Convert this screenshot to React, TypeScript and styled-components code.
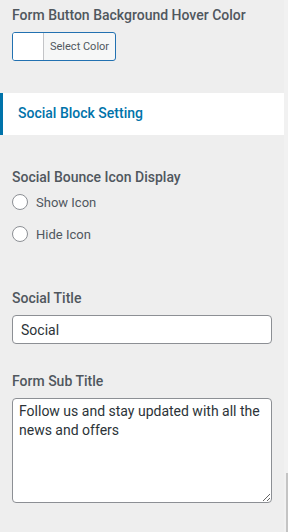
import React from "react";
import styled, { createGlobalStyle } from "styled-components";

const GlobalStyle = createGlobalStyle`
	html, body {
		margin: 0;
		padding: 0;
		background: #eeeeee;
	}
	body {
		font-family: Roboto, "Liberation Sans", sans-serif;
		color: #50575e;
	}
`;

const Page = styled.div`
	display: flex;
	width: 288px;
	height: 532px;
	overflow: hidden;
`;

const Main = styled.div`
	flex: 1;
	display: flex;
	flex-direction: column;
	padding-top: 6px;
`;

const ScrollTrack = styled.div`
	width: 4px;
	background: #f1f1f1;
	display: flex;
	flex-direction: column;
	justify-content: flex-end;
	align-items: flex-end;
`;

const Thumb = styled.div`
	width: 2px;
	height: 59px;
	background: #c4c4c4;
`;

const Field = styled.div<{ mt?: number }>`
	padding: 0 12px;
	margin-top: ${(p) => p.mt || 0}px;
`;

const Label = styled.div`
	font-size: 14px;
	font-weight: 500;
	line-height: 18px;
	color: #50575e;
	margin-bottom: 8px;
`;

const ColorButton = styled.div`
	display: flex;
	width: 104px;
	height: 29px;
	box-sizing: border-box;
	border: 1px solid #2271b1;
	border-radius: 3px;
	overflow: hidden;
	background: #f6f7f7;
`;

const Swatch = styled.div`
	width: 30px;
	background: #ffffff;
	border-right: 1px solid #c3c4c7;
`;

const ColorText = styled.span`
	font-size: 11px;
	line-height: 27px;
	padding-left: 6px;
	color: #50575e;
`;

const SectionHeader = styled.div`
	margin-top: 32px;
	height: 42px;
	box-sizing: border-box;
	padding-bottom: 2px;
	background: #ffffff;
	border-left: 3px solid #0073aa;
	display: flex;
	align-items: center;
	padding-left: 15px;
	font-size: 14px;
	font-weight: 500;
	color: #0073aa;
`;

const RadioRow = styled.label`
	display: flex;
	align-items: center;
	gap: 8px;
	height: 16px;
	margin-bottom: 16px;
	font-size: 13px;
	color: #50575e;
`;

const RadioDot = styled.span`
	width: 16px;
	height: 16px;
	box-sizing: border-box;
	border: 1px solid #8c8f94;
	border-radius: 50%;
	background: #ffffff;
`;

const TextInput = styled.input`
	display: block;
	width: 260px;
	height: 29px;
	box-sizing: border-box;
	border: 1px solid #8c8f94;
	border-radius: 4px;
	background: #ffffff;
	padding: 0 8px;
	font-family: Roboto, "Liberation Sans", sans-serif;
	font-size: 14px;
	color: #2c3338;
	outline: none;
`;

const TextArea = styled.textarea`
	display: block;
	width: 260px;
	height: 105px;
	box-sizing: border-box;
	border: 1px solid #8c8f94;
	border-radius: 4px;
	background: #ffffff;
	padding: 3px 6px;
	font-family: Roboto, "Liberation Sans", sans-serif;
	font-size: 14px;
	line-height: 19px;
	color: #2c3338;
	outline: none;
`;

const App: React.FC = () => {
	return (
		<Page>
			<GlobalStyle />
			<Main>
				<Field>
					<Label>Form Button Background Hover Color</Label>
					<ColorButton>
						<Swatch />
						<ColorText>Select Color</ColorText>
					</ColorButton>
				</Field>
				<SectionHeader>Social Block Setting</SectionHeader>
				<Field mt={33}>
					<Label>Social Bounce Icon Display</Label>
					<RadioRow>
						<RadioDot />
						Show Icon
					</RadioRow>
					<RadioRow>
						<RadioDot />
						Hide Icon
					</RadioRow>
				</Field>
				<Field mt={31}>
					<Label>Social Title</Label>
					<TextInput defaultValue="Social" />
				</Field>
				<Field mt={28}>
					<Label>Form Sub Title</Label>
					<TextArea defaultValue="Follow us and stay updated with all the news and offers" />
				</Field>
			</Main>
			<ScrollTrack>
				<Thumb />
			</ScrollTrack>
		</Page>
	);
};

export default App;
